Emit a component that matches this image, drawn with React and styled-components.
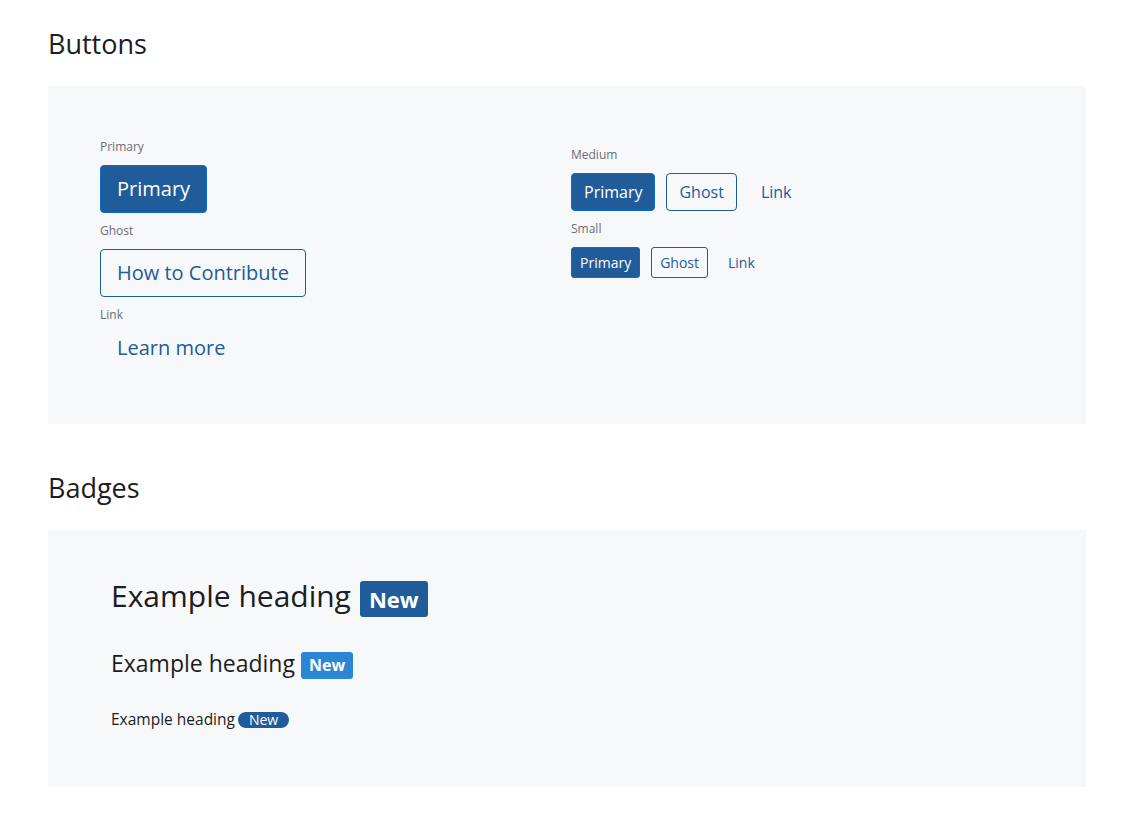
import styled, { createGlobalStyle } from 'styled-components'

const GlobalStyle = createGlobalStyle`
  body {
    margin: 0;
    background: #ffffff;
    font-family: "Open Sans", "Noto Sans", sans-serif;
    color: #151515;
  }
`

const Page = styled.div`
  padding: 22px 48px 30px;
`

const SectionTitle = styled.h2`
  margin: 0 0 20px;
  font-size: 27px;
  font-weight: 400;
  line-height: 44px;
  color: #1b1d21;
`

const Panel = styled.div`
  background: #f7f8fa;
  padding: ${(p) => p.pad};
  margin-bottom: ${(p) => (p.last ? 0 : 42)}px;
`

const Columns = styled.div`
  display: grid;
  grid-template-columns: 1fr 1fr;
  column-gap: 8px;
`

const Column = styled.div`
  display: flex;
  flex-direction: column;
  align-items: flex-start;
  padding-top: ${(p) => p.top || 0}px;
`

const Label = styled.div`
  font-size: 12px;
  line-height: 18px;
  color: #6a6e73;
  margin-bottom: 9px;
`

const Row = styled.div`
  display: flex;
  align-items: center;
  gap: ${(p) => p.gap}px;
  margin-bottom: 9px;
`

const sizes = {
  lg: { font: 20, h: 48, px: 16, radius: 4 },
  md: { font: 16, h: 38, px: 12, radius: 4 },
  sm: { font: 14, h: 31, px: 8, radius: 3 },
}

const Button = styled.button`
  font-family: inherit;
  font-size: ${(p) => sizes[p.size].font}px;
  height: ${(p) => (p.variant === 'link' && p.size === 'lg' ? 30 : sizes[p.size].h)}px;
  padding: 0 ${(p) => sizes[p.size].px}px;
  border-radius: ${(p) => sizes[p.size].radius}px;
  line-height: 1;
  cursor: pointer;
  margin-bottom: 9px;
  background: ${(p) => (p.variant === 'primary' ? '#205c99' : 'transparent')};
  color: ${(p) => (p.variant === 'primary' ? '#ffffff' : '#205c99')};
  border: 1px solid
    ${(p) => (p.variant === 'primary' ? '#0b6bd0' : p.variant === 'ghost' ? '#205c99' : 'transparent')};
  ${Row} & {
    margin-bottom: 0;
  }
`

const HeadingLine = styled.div`
  display: flex;
  align-items: center;
  gap: ${(p) => p.gap}px;
  height: ${(p) => p.h}px;
  margin-bottom: ${(p) => p.mb}px;
  font-size: ${(p) => p.size}px;
  color: #1b1d21;
  line-height: 1;
`

const HeadingText = styled.span`
  position: relative;
  top: ${(p) => p.shift || 0}px;
`

const Badge = styled.span`
  display: inline-flex;
  align-items: center;
  justify-content: center;
  background: ${(p) => p.bg};
  color: #ffffff;
  font-weight: ${(p) => p.weight};
  font-size: ${(p) => p.fs}px;
  height: ${(p) => p.h}px;
  padding: 0 ${(p) => p.px}px;
  border-radius: ${(p) => p.radius}px;
`

export default function App() {
  return (
    <>
      <GlobalStyle />
      <Page>
        <SectionTitle>Buttons</SectionTitle>
        <Panel pad="52px 52px 52px">
          <Columns>
            <Column>
              <Label>Primary</Label>
              <Button size="lg" variant="primary">Primary</Button>
              <Label>Ghost</Label>
              <Button size="lg" variant="ghost">How to Contribute</Button>
              <Label>Link</Label>
              <Button size="lg" variant="link">Learn more</Button>
            </Column>
            <Column top={8}>
              <Label>Medium</Label>
              <Row gap={11}>
                <Button size="md" variant="primary">Primary</Button>
                <Button size="md" variant="ghost">Ghost</Button>
                <Button size="md" variant="link">Link</Button>
              </Row>
              <Label>Small</Label>
              <Row gap={11}>
                <Button size="sm" variant="primary">Primary</Button>
                <Button size="sm" variant="ghost">Ghost</Button>
                <Button size="sm" variant="link">Link</Button>
              </Row>
            </Column>
          </Columns>
        </Panel>

        <SectionTitle>Badges</SectionTitle>
        <Panel pad="51px 63px 58px" last>
          <HeadingLine size={30} h={36} gap={9} mb={34}>
            <HeadingText shift={-3}>Example heading</HeadingText>
            <Badge bg="#205c99" weight={700} fs={22} h={36} px={9} radius={3}>New</Badge>
          </HeadingLine>
          <HeadingLine size={23} h={28} gap={6} mb={32}>
            <HeadingText shift={-2}>Example heading</HeadingText>
            <Badge bg="#2b87d4" weight={700} fs={16} h={27} px={8} radius={3}>New</Badge>
          </HeadingLine>
          <HeadingLine size={15.5} h={18} gap={3} mb={0}>
            <HeadingText>Example heading</HeadingText>
            <Badge bg="#205c99" weight={400} fs={14} h={16} px={11} radius={8}>New</Badge>
          </HeadingLine>
        </Panel>
      </Page>
    </>
  )
}
